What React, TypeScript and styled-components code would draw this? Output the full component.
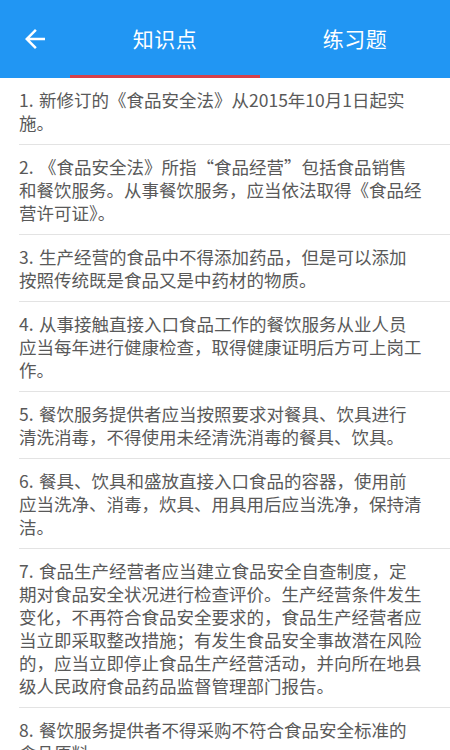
import React from 'react';
import styled, { createGlobalStyle } from 'styled-components';

const GlobalStyle = createGlobalStyle`
  html, body {
    margin: 0;
    padding: 0;
    background: #ffffff;
  }
  body {
    font-family: 'Noto Sans CJK SC', 'Noto Sans', sans-serif;
  }
`;

const Screen = styled.div`
  display: flex;
  flex-direction: column;
  width: 450px;
  height: 750px;
  overflow: hidden;
  background: #ffffff;
`;

const Header = styled.div`
  display: flex;
  align-items: stretch;
  height: 78px;
  flex-shrink: 0;
  background: #2196f3;
`;

const BackButton = styled.button`
  display: flex;
  align-items: center;
  width: 70px;
  padding: 0 0 0 20px;
  border: none;
  background: transparent;
  cursor: pointer;
`;

const Tab = styled.div<{ $active?: boolean }>`
  flex: 1;
  display: flex;
  align-items: center;
  justify-content: center;
  box-sizing: border-box;
  padding-top: ${(p) => (p.$active ? '1px' : '0')};
  border-bottom: 3px solid ${(p) => (p.$active ? '#d6404a' : 'transparent')};
  color: #ffffff;
  font-size: 21px;
  letter-spacing: 0.5px;
`;

const List = styled.div`
  flex: 1;
  overflow: hidden;
`;

const Item = styled.div`
  margin-left: 19px;
  padding: 10px 27px 10px 0;
  border-bottom: 1px solid #e3e3e3;
  color: #595959;
  font-size: 17.5px;
  line-height: 23px;
`;

const Num = styled.span`
  display: inline-block;
  min-width: 20px;
`;

const items = [
  '新修订的《食品安全法》从2015年10月1日起实施。',
  '《食品安全法》所指“食品经营”包括食品销售和餐饮服务。从事餐饮服务，应当依法取得《食品经营许可证》。',
  '生产经营的食品中不得添加药品，但是可以添加按照传统既是食品又是中药材的物质。',
  '从事接触直接入口食品工作的餐饮服务从业人员应当每年进行健康检查，取得健康证明后方可上岗工作。',
  '餐饮服务提供者应当按照要求对餐具、饮具进行清洗消毒，不得使用未经清洗消毒的餐具、饮具。',
  '餐具、饮具和盛放直接入口食品的容器，使用前应当洗净、消毒，炊具、用具用后应当洗净，保持清洁。',
  '食品生产经营者应当建立食品安全自查制度，定期对食品安全状况进行检查评价。生产经营条件发生变化，不再符合食品安全要求的，食品生产经营者应当立即采取整改措施；有发生食品安全事故潜在风险的，应当立即停止食品生产经营活动，并向所在地县级人民政府食品药品监督管理部门报告。',
  '餐饮服务提供者不得采购不符合食品安全标准的食品原料。',
];

const App: React.FC = () => {
  return (
    <Screen lang="zh-CN">
      <GlobalStyle />
      <Header>
        <BackButton aria-label="返回">
          <svg width="30" height="30" viewBox="0 0 24 24" fill="#ffffff">
            <path d="M20 11H7.83l5.59-5.59L12 4l-8 8 8 8 1.41-1.41L7.83 13H20v-2z" />
          </svg>
        </BackButton>
        <Tab $active>知识点</Tab>
        <Tab>练习题</Tab>
      </Header>
      <List>
        {items.map((text, index) => (
          <Item key={index}>
            <Num>{index + 1}.</Num>
            {text}
          </Item>
        ))}
      </List>
    </Screen>
  );
};

export default App;
